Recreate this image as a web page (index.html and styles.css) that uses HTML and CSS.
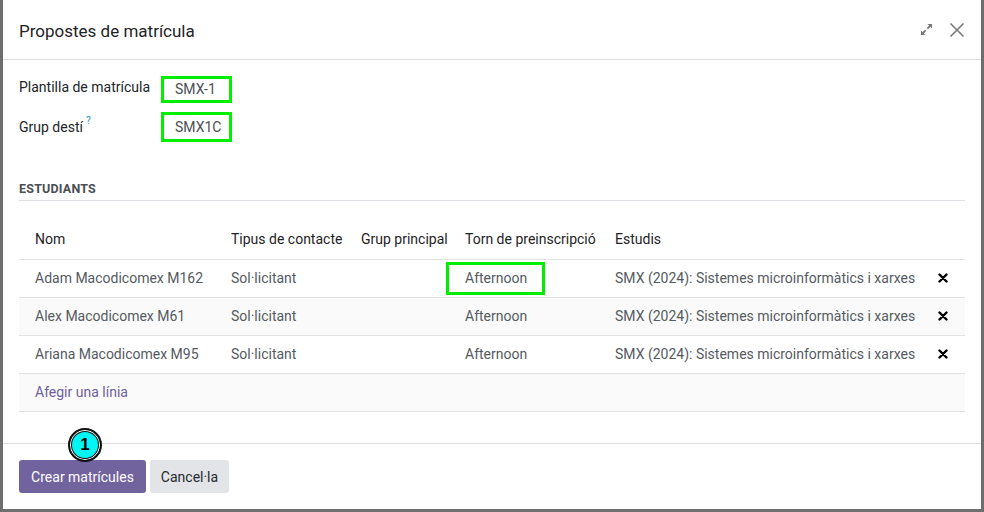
FILE: index.html
```html
<!DOCTYPE html>
<html lang="ca">
<head>
<meta charset="utf-8">
<title>Propostes de matrícula</title>
<link rel="stylesheet" href="styles.css">
</head>
<body>
<div class="dialog">
  <header class="dlg-head">
    <h4 class="dlg-title">Propostes de matrícula</h4>
    <div class="dlg-tools">
      <svg class="ic-expand" width="14" height="14" viewBox="0 0 14 14">
        <path d="M8 1h5v5l-1.8-1.8-2.6 2.6-1.4-1.4 2.6-2.6z M6 13H1V8l1.8 1.8 2.6-2.6 1.4 1.4-2.6 2.6z" fill="#7a7a7a"/>
      </svg>
      <svg class="ic-close" width="16" height="16" viewBox="0 0 16 16">
        <path d="M1.5 1.5l13 13M14.5 1.5l-13 13" stroke="#7a7a7a" stroke-width="1.6" fill="none"/>
      </svg>
    </div>
  </header>
  <main class="dlg-body">
    <div class="fields">
      <div class="field">
        <span class="f-label">Plantilla de matrícula</span>
        <span class="f-value mark">SMX-1</span>
      </div>
      <div class="field">
        <span class="f-label">Grup destí<sup class="help">?</sup></span>
        <span class="f-value mark tall">SMX1C</span>
      </div>
    </div>
    <div class="section-title">ESTUDIANTS</div>
    <table class="list">
      <colgroup>
        <col class="c-nom"><col class="c-tipus"><col class="c-grup"><col class="c-torn"><col class="c-est"><col class="c-del">
      </colgroup>
      <thead>
        <tr><th>Nom</th><th>Tipus de contacte</th><th>Grup principal</th><th>Torn de preinscripció</th><th>Estudis</th><th></th></tr>
      </thead>
      <tbody>
        <tr><td>Adam Macodicomex M162</td><td>Sol·licitant</td><td></td><td><span class="mark cell-mark">Afternoon</span></td><td>SMX (2024): Sistemes microinformàtics i xarxes</td><td class="del"><svg width="10" height="10" viewBox="0 0 10 10"><path d="M1.5 1.5l7 7M8.5 1.5l-7 7" stroke="#000" stroke-width="2.4" stroke-linecap="round"/></svg></td></tr>
        <tr class="alt"><td>Alex Macodicomex M61</td><td>Sol·licitant</td><td></td><td>Afternoon</td><td>SMX (2024): Sistemes microinformàtics i xarxes</td><td class="del"><svg width="10" height="10" viewBox="0 0 10 10"><path d="M1.5 1.5l7 7M8.5 1.5l-7 7" stroke="#000" stroke-width="2.4" stroke-linecap="round"/></svg></td></tr>
        <tr><td>Ariana Macodicomex M95</td><td>Sol·licitant</td><td></td><td>Afternoon</td><td>SMX (2024): Sistemes microinformàtics i xarxes</td><td class="del"><svg width="10" height="10" viewBox="0 0 10 10"><path d="M1.5 1.5l7 7M8.5 1.5l-7 7" stroke="#000" stroke-width="2.4" stroke-linecap="round"/></svg></td></tr>
        <tr class="alt add"><td colspan="6"><a class="add-line">Afegir una línia</a></td></tr>
      </tbody>
    </table>
  </main>
  <footer class="dlg-foot">
    <button class="btn btn-primary">Crear matrícules</button>
    <button class="btn btn-secondary">Cancel·la</button>
    <span class="badge">1</span>
  </footer>
</div>
</body>
</html>
```
FILE: styles.css
```css
* { box-sizing: border-box; }
html, body { margin: 0; padding: 0; }
body {
  background: #6e6e6e;
  width: 984px;
  height: 512px;
  overflow: hidden;
  font-family: Roboto, "Noto Sans", sans-serif;
  font-size: 14px;
  color: #4b4f54;
}
.dialog {
  margin: 0 3px;
  width: 978px;
  height: 509px;
  background: #fff;
  display: flex;
  flex-direction: column;
}
.dlg-head {
  height: 60px;
  border-bottom: 1px solid #dcdcdc;
  display: flex;
  align-items: center;
  padding: 0 16px;
}
.dlg-title {
  margin: 0;
  flex: 1;
  font-weight: 400;
  font-size: 17px;
  color: #1f2327;
  padding-top: 2px;
}
.dlg-tools { display: flex; align-items: center; gap: 16px; padding-right: 0; }
.ic-expand { width: 13px; height: 13px; }

.dlg-body {
  flex: 1;
  padding: 16px 16px 0 16px;
}
.fields { display: flex; flex-direction: column; gap: 9px; }
.field { display: flex; align-items: flex-start; }
.f-label {
  width: 142px;
  color: #212529;
  line-height: 20px;
  padding-top: 1px;
}
.help { color: #1a8fb3; font-size: 10px; margin-left: 3px; position: relative; top: -2px; }
.mark { border: 3px solid #00ee00; }
.f-value {
  display: inline-block;
  padding: 3px 11px 3px 11px;
  line-height: 15px;
  width: 71px;
  color: #4b4f54;
}
.f-value.tall { padding-top: 5px; padding-bottom: 4px; }

.section-title {
  margin-top: 39px;
  font-size: 12.5px;
  font-weight: 700;
  color: #4b4f54;
  letter-spacing: 0.2px;
  padding-bottom: 4px;
  border-bottom: 1px solid #dee2e6;
}

.list {
  margin-top: 19px;
  width: 946px;
  border-collapse: collapse;
  table-layout: fixed;
}
.c-nom { width: 204px; }
.c-tipus { width: 130px; }
.c-grup { width: 104px; }
.c-torn { width: 150px; }
.c-est { width: 320px; }
.c-del { width: 38px; }
.list th, .list td {
  padding: 0 8px;
  height: 38px;
  text-align: left;
  white-space: nowrap;
  overflow: visible;
  border-bottom: 1px solid #e2e2e2;
}
.list th:first-child, .list td:first-child { padding-left: 16px; }
.list th { font-weight: 400; color: #1f2327; height: 39px; }
.list td { color: #555a5f; }
.list tr.alt td { background: #fafafa; }
.list td.del { text-align: left; padding: 0 0 0 11px; line-height: 0; }
.cell-mark {
  display: inline-block;
  margin-left: -19px;
  padding: 5px 15px 5px 16px;
  line-height: 17px;
}
.add-line { color: #6f5f9c; }

.dlg-foot {
  position: relative;
  height: 66px;
  border-top: 1px solid #dcdcdc;
  padding: 16px 16px;
  display: flex;
  align-items: center;
  gap: 4px;
}
.btn {
  font-family: inherit;
  font-size: 14px;
  height: 33px;
  border: none;
  border-radius: 3px;
  padding: 0 10px;
}
.btn-primary { background: #71639e; color: #fff; width: 127px; }
.btn-secondary { background: #e2e4e8; color: #262a2e; width: 79px; }
.badge {
  position: absolute;
  left: 65px;
  top: -16px;
  width: 34px;
  height: 34px;
  border-radius: 50%;
  background: #00f5f5;
  border: 2px solid #111;
  box-shadow: inset 0 0 0 1px #fff, inset 0 0 0 2px #111;
  display: flex;
  align-items: center;
  justify-content: center;
  font-family: "Liberation Sans", Arial, sans-serif;
  font-weight: 700;
  font-size: 17px;
  color: #000;
}
```
